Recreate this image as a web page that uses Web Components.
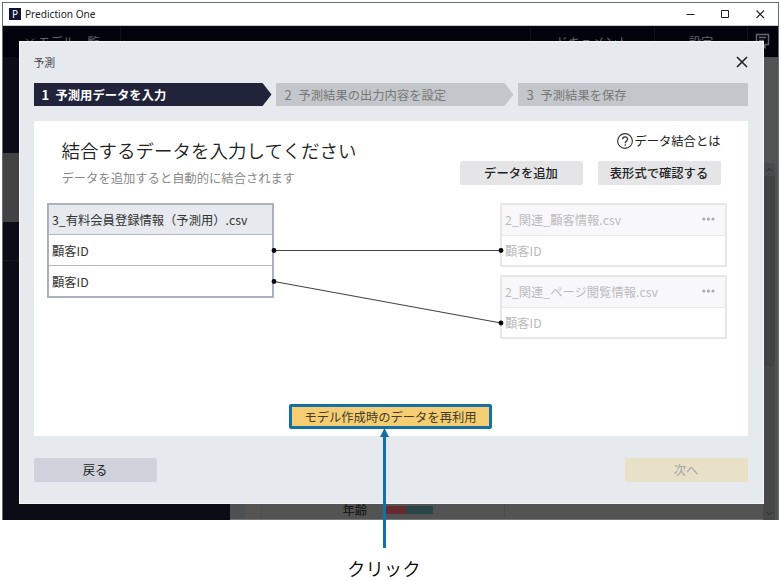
<!DOCTYPE html>
<html lang="ja">
<head>
<meta charset="utf-8">
<title>Prediction One</title>
<style>
html,body{margin:0;height:100%;background:#fff;overflow:hidden}
body{font-family:"Noto Sans CJK JP",sans-serif;font-size:12.3px;color:#333}
</style>
</head>
<body>
<tutorial-figure></tutorial-figure>
<script>
function define(name, html) {
  const template = document.createElement('template');
  template.innerHTML = '<style>*{box-sizing:border-box}</style>' + html;
  customElements.define(name, class extends HTMLElement {
    constructor() {
      super();
      this.attachShadow({ mode: 'open' }).append(template.content.cloneNode(true));
    }
  });
}

define('title-bar', `
<style>
:host{display:flex;height:23px;background:#fff;align-items:center;padding-left:6px;font:10.1px/22px "Noto Sans",sans-serif;color:#222;border-bottom:1px solid #c9ccd2;box-sizing:border-box}
.logo{width:12px;height:12px;background:#10132f;color:#fff;font:10px/12px "Noto Sans",sans-serif;text-align:center;margin-right:4px}
.name{flex:1}
</style>
<span class="logo">P</span><span class="name">Prediction One</span>
<svg width="93" height="20" viewBox="0 0 93 20" fill="none" stroke="#222" stroke-width="1"><path d="M1.5 10.5h8M36.5 6.5h7v7h-7z"/><path d="M71.5 6.5l7.5 7.5M79 6.5l-7.5 7.5" stroke-width="1.1"/></svg>`);

define('app-header', `
<style>
:host{display:grid;grid-template-columns:118px 1fr 124px 93px 30px;height:31px;background:#01030c;color:#66686c;font-size:12.3px;line-height:33px}
span{border-right:1px solid #0f121b;text-align:center;overflow:hidden}
svg{margin:7px 0 0 7px}
.first{text-align:left;display:flex}
.first svg{margin:12px 3px 0 22px}
</style>
<span class="first"><svg width="10" height="8" fill="none" stroke="#66686c"><path d="M1 .5l4 4 4-4"/></svg>モデル一覧</span><span></span><span>ドキュメント</span><span>設定</span>
<svg width="16" height="16" viewBox="0 0 16 16" fill="none" stroke="#66686c" stroke-width="1.4"><path d="M1.5 1.5h12v10h-3.5v3l-3-3h-5.5zM4 4.5h7M4 7.5h5"/></svg>`);

define('app-background', `
<style>
:host{display:grid;grid-template-columns:227px 1fr 15px;flex:1;min-height:0;background:#555}
.side{background:#0a0d15;display:grid;grid-template-rows:96px 69px 39px 1fr}
.sel{background:#434343;grid-row:2}
.line{border-bottom:1px solid #181b21;grid-row:3}
.main{display:flex;align-items:flex-end;padding-left:31px;background:linear-gradient(90deg,#4d5052 15px,#555453 15px,#555453 31px,#535353 31px);border-bottom:1px solid #777}
.row{flex:1;display:grid;grid-template-columns:122px 22px 27px 72px 1fr;align-items:center;height:18px;color:#111;line-height:18px;border-left:1px solid #4d4d4d}
.age{padding-left:80.5px}
.r{height:8px;background:#642a2d}
.t{height:8px;background:#2a4547}
.end{height:18px;border-right:1px solid #4b4b4b}
.scroll{display:grid;grid-template-rows:106px 13px 190px 1fr 13px;background:linear-gradient(90deg,#48484a 12px,#515253 12px)}
.gap{background:#525355}
.up{background:#4a4a4b;width:12px}
.thumb{background:#414243;width:12px}
svg{display:block}
</style>
<div class="side"><div class="sel"></div><div class="line"></div></div>
<div class="main"><div class="row"><span class="age">年齢</span><span class="r"></span><span class="t"></span><span class="end"></span></div></div>
<div class="scroll"><div class="gap"></div><div class="up"><svg width="12" height="13" fill="none" stroke="#2b2b2b"><path d="M4 8l2.5-2.5 2.5 2.5"/></svg></div><div class="thumb"></div><div></div><svg width="12" height="13" fill="none" stroke="#2b2b2b"><path d="M4 5l2.5 2.5 2.5-2.5"/></svg></div>`);

define('step-item', `
<style>
:host{display:flex;height:23px;line-height:24px;font-size:12.3px;color:#777;background:#c3c6ca;padding-left:9px;white-space:nowrap;clip-path:polygon(0 0,calc(100% - 9px) 0,100% 50%,calc(100% - 9px) 100%,0 100%);box-sizing:border-box}
:host([active]){background:#20233a;color:#fff;font-weight:700;padding-left:8px}
:host([last]){clip-path:none}
b{font-weight:inherit;width:14px;font-size:13px}
</style><b><slot name="n"></slot></b><slot></slot>`);

define('push-button', `
<style>
:host{display:block;width:123px;height:24px;border-radius:2px;background:#e5e5e8;color:#222;font-weight:500;font-size:12.3px;line-height:24px;text-align:center;box-sizing:border-box}
:host([back]){background:#cfd2da;font-weight:400}
:host([next]){background:#e9e0c8;color:#a5a6a8;font-weight:400}
:host([reuse]){width:203px;height:25px;border:3px solid #1770a5;background:#f5ce74;color:#443b2b;font-weight:400;line-height:20px}
</style><slot></slot>`);

define('table-card', `
<style>
:host{display:block;position:absolute;width:227px;border:2px solid #acb1bf;background:#fff;color:#333;box-sizing:border-box}
.head{height:29px;line-height:30px;padding:0 10px 0 3.5px;background:#e6e9ee;display:flex;justify-content:space-between;white-space:nowrap}
.head svg{display:none;margin-top:12px}
::slotted(div){height:31px;line-height:32px;padding-left:3.5px;border-top:1px solid #b4b8c4;box-sizing:border-box}
:host([muted]){border-color:#e6e7e9;color:#bbb}
:host([muted]) .head{background:#f8f8fb;height:30px}
:host([muted]) .head svg{display:block}
:host([muted]) ::slotted(div){border-color:#e6e7e9;height:30px;line-height:30px}
</style>
<div class="head"><span><slot name="file"></slot></span><svg width="13" height="4" fill="#aaa"><circle cx="1.8" cy="2" r="1.6"/><circle cx="6.4" cy="2" r="1.6"/><circle cx="11" cy="2" r="1.6"/></svg></div><slot></slot>`);

define('join-diagram', `
<style>
:host{display:block;position:relative;flex:1;min-height:0}
.links{position:absolute;left:0;top:0}
.a{left:13px;top:11px}.b{left:466px;top:11px}.c{left:466px;top:83px}
</style>
<table-card class="a"><span slot="file">3_有料会員登録情報（予測用）.csv</span><div>顧客ID</div><div>顧客ID</div></table-card>
<table-card class="b" muted><span slot="file">2_関連_顧客情報.csv</span><div>顧客ID</div></table-card>
<table-card class="c" muted><span slot="file">2_関連_ページ閲覧情報.csv</span><div>顧客ID</div></table-card>
<svg class="links" width="714" height="200" stroke="#444" stroke-width="1.2"><path d="M240 58.5H467M240 89.5L467 131"/><g fill="#000" stroke="none"><circle cx="240" cy="58.5" r="2.4"/><circle cx="467" cy="58.5" r="2.4"/><circle cx="240" cy="89.5" r="2.4"/><circle cx="467" cy="131" r="2.4"/></g></svg>`);

define('join-panel', `
<style>
:host{display:flex;flex-direction:column;width:714px;height:315px;background:#fff;box-sizing:border-box}
.top{display:flex;justify-content:space-between;height:71px;padding:11px 27px 0 28px}
h1{font-size:18.5px;font-weight:350;line-height:36px;margin:0;color:#222}
p{margin:0;font-size:12.3px;line-height:20px;color:#888}
.help{display:flex;justify-content:flex-end;align-items:center;height:18px;font-size:12.3px;color:#222}
.btns{display:flex;gap:15px;margin-top:11px}
push-button[reuse]{margin:0 0 7px 255.5px}
</style>
<div class="top"><div><h1>結合するデータを入力してください</h1><p>データを追加すると自動的に結合されます</p></div>
<div><div class="help"><svg width="18" height="18" viewBox="0 0 18 18" fill="none" stroke="#333" stroke-width="1.1"><circle cx="9" cy="9" r="7.4"/><path d="M6.7 7.2c0-3 4.9-3 4.9-.2 0 2-2.4 2-2.4 4.3" stroke-width="1.3"/><circle cx="9.2" cy="13" r=".8" fill="#333" stroke="none"/></svg><span>データ結合とは</span></div>
<div class="btns"><push-button>データを追加</push-button><push-button>表形式で確認する</push-button></div></div></div>
<join-diagram></join-diagram>
<push-button reuse>モデル作成時のデータを再利用</push-button>`);

define('predict-dialog', `
<style>
:host{display:flex;flex-direction:column;position:absolute;width:745px;height:463px;background:#e6e9ee;border:1px solid #f4f6f8;padding:0 15px 0 14px;box-sizing:border-box}
.title{display:flex;justify-content:space-between;height:41px;line-height:40px;font-size:10.8px;color:#444}
.title svg{margin-top:14px}
.steps{display:grid;grid-template-columns:238px 238px 230px;gap:4px;margin-bottom:15px}
.foot{display:flex;justify-content:space-between;padding-top:22px}
</style>
<div class="title"><span>予測</span><svg width="12" height="12" stroke="#222" stroke-width="1.6"><path d="M1 1l10 10M11 1L1 11"/></svg></div>
<div class="steps"><step-item active><span slot="n">1</span>予測用データを入力</step-item><step-item><span slot="n">2</span>予測結果の出力内容を設定</step-item><step-item last><span slot="n">3</span>予測結果を保存</step-item></div>
<join-panel></join-panel>
<div class="foot"><push-button back>戻る</push-button><push-button next>次へ</push-button></div>`);

define('app-window', `
<style>
:host{display:flex;flex-direction:column;position:relative;width:777px;height:518px;overflow:hidden;border:1px solid #60716d;border-bottom:0;box-sizing:border-box}
predict-dialog{left:15.5px;top:38px}
</style>
<title-bar></title-bar><app-header></app-header><app-background></app-background><predict-dialog></predict-dialog>`);

define('tutorial-figure', `
<style>
:host{display:block;position:relative;padding:2px 2px 0;width:781px;height:581px;box-sizing:border-box}
.caption{margin:39px 0 0 345px;font:350 18.4px/22px "Liberation Sans","Noto Sans CJK JP",sans-serif;color:#000}
.arrow{position:absolute;left:378px;top:428px}
</style>
<app-window></app-window><div class="caption">クリック</div>
<svg class="arrow" width="13" height="121"><path d="M6.5 8v112" stroke="#1770a5" stroke-width="3"/><path d="M6.5 0l4.5 9h-9z" fill="#1770a5"/></svg>`);
</script>
</body>
</html>
